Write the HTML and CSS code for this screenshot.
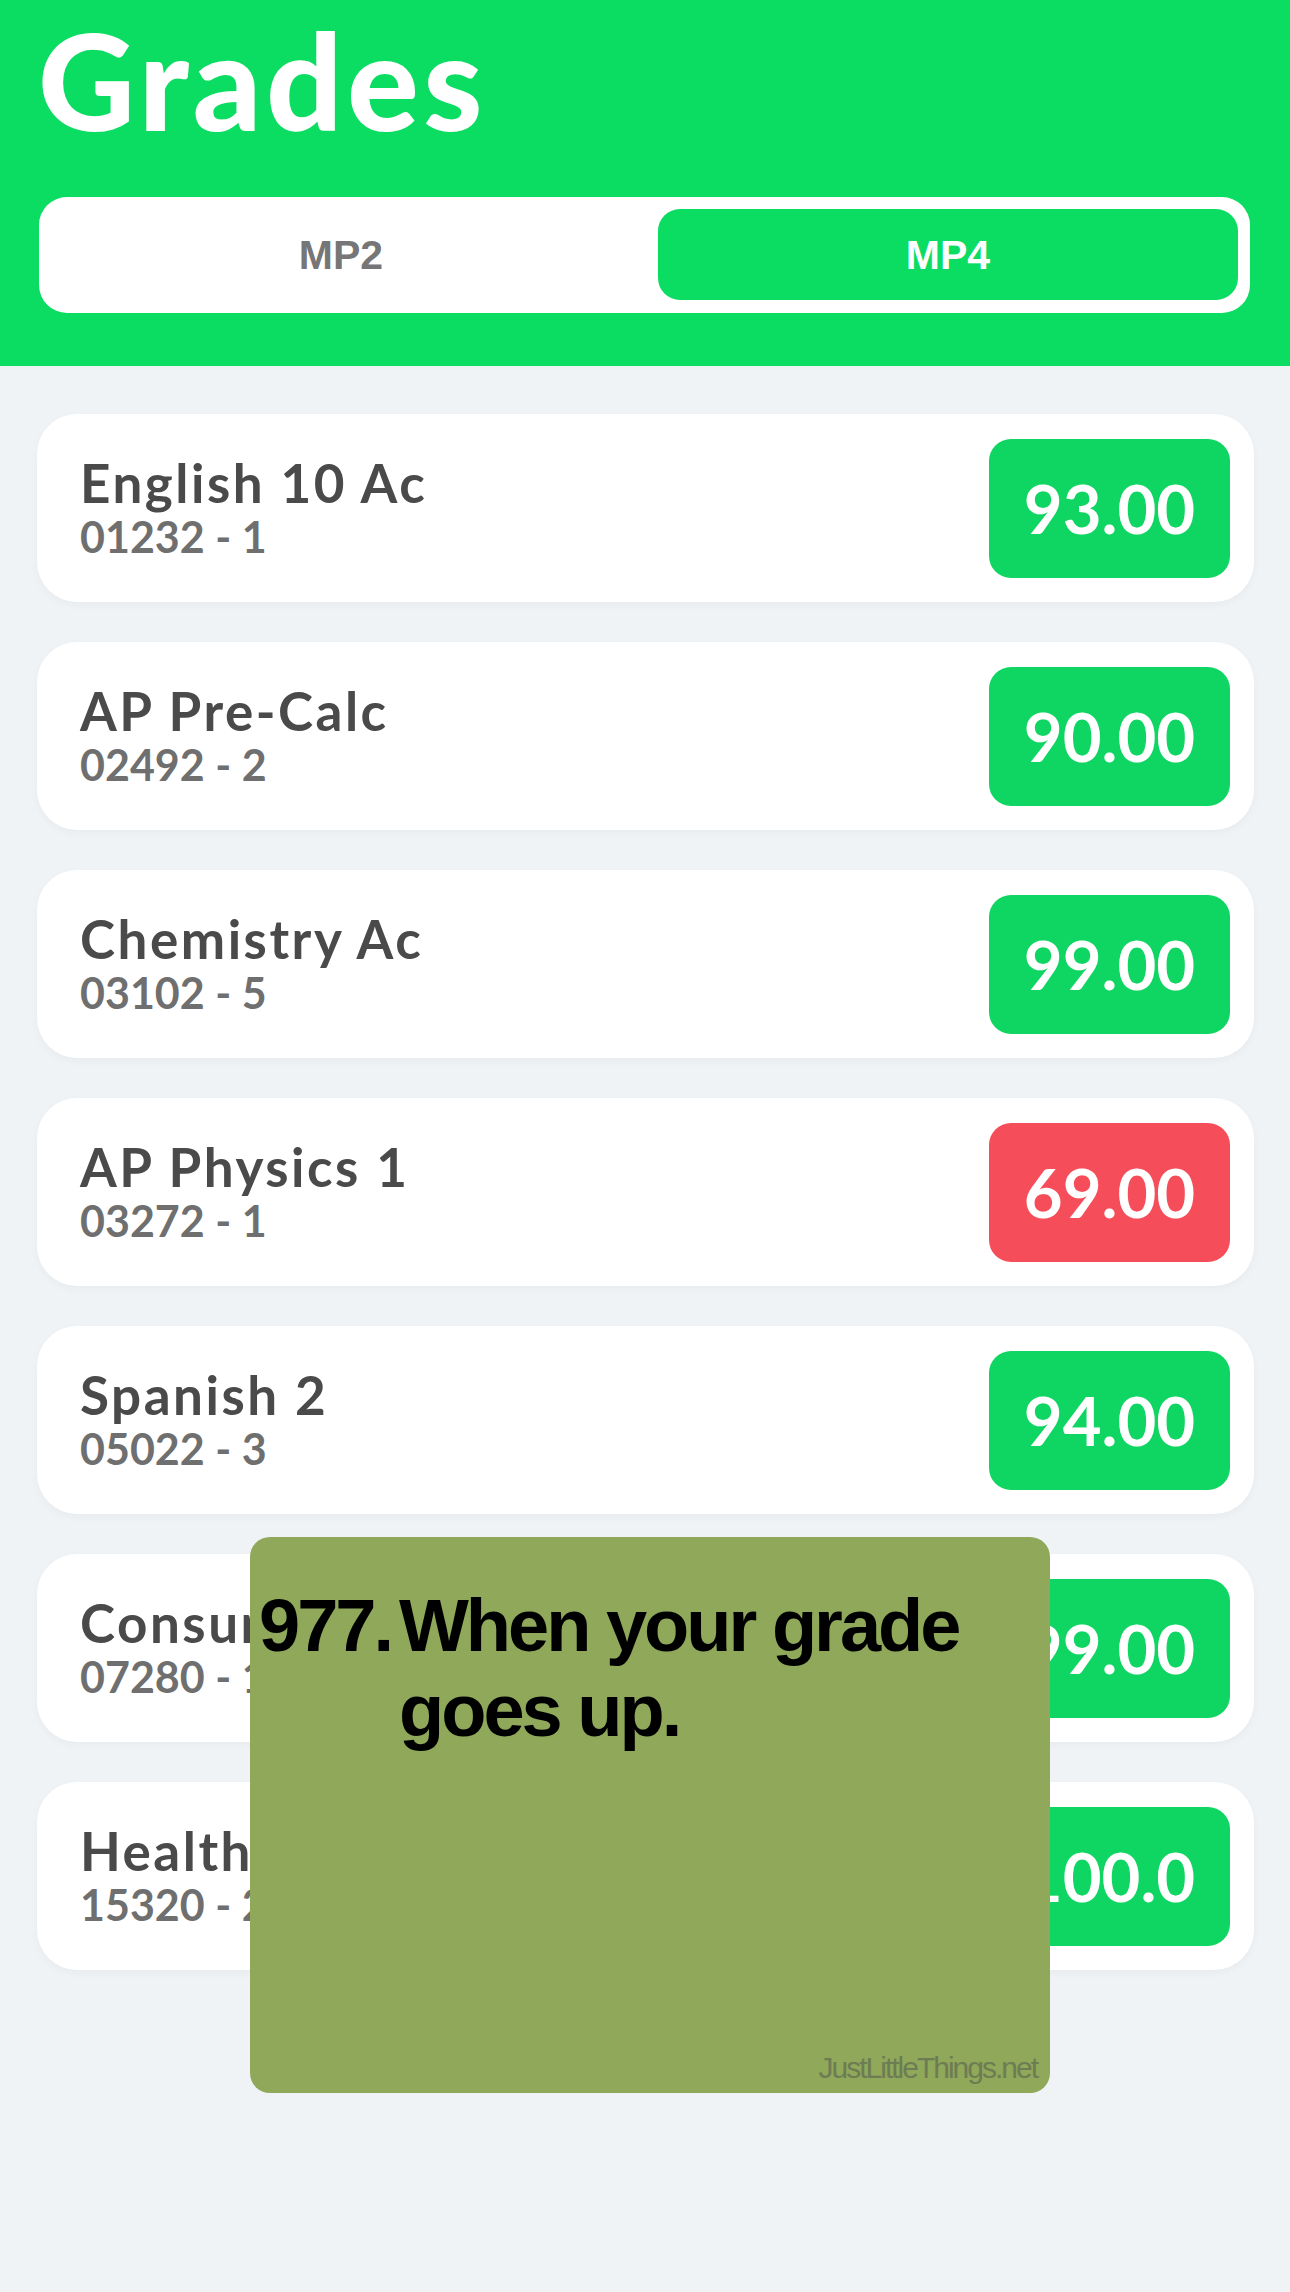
FILE: index.html
```html
<!DOCTYPE html>
<html lang="en">
<head>
<meta charset="utf-8">
<title>Grades</title>
<link rel="stylesheet" href="styles.css">
</head>
<body>
<header class="header">
  <h1 class="title">Grades</h1>
  <div class="segmented">
    <div class="segment">MP2</div>
    <div class="segment segment-active">MP4</div>
  </div>
</header>

<main class="list">
  <div class="card">
    <div class="course"><div class="name">English 10 Ac</div><div class="code">01232 - 1</div></div>
    <div class="grade">93.00</div>
  </div>
  <div class="card">
    <div class="course"><div class="name">AP Pre-Calc</div><div class="code">02492 - 2</div></div>
    <div class="grade">90.00</div>
  </div>
  <div class="card">
    <div class="course"><div class="name">Chemistry Ac</div><div class="code">03102 - 5</div></div>
    <div class="grade">99.00</div>
  </div>
  <div class="card">
    <div class="course"><div class="name">AP Physics 1</div><div class="code">03272 - 1</div></div>
    <div class="grade grade-low">69.00</div>
  </div>
  <div class="card">
    <div class="course"><div class="name">Spanish 2</div><div class="code">05022 - 3</div></div>
    <div class="grade">94.00</div>
  </div>
  <div class="card">
    <div class="course"><div class="name">Consumer</div><div class="code">07280 - 1</div></div>
    <div class="grade">99.00</div>
  </div>
  <div class="card">
    <div class="course"><div class="name">Health</div><div class="code">15320 - 2</div></div>
    <div class="grade">100.0</div>
  </div>
</main>

<div class="meme">
  <div class="meme-text">
    <span class="meme-num">977.</span>
    <span class="meme-line">When your grade goes up.</span>
  </div>
  <div class="watermark">JustLittleThings.net</div>
</div>
</body>
</html>
```
FILE: styles.css
```css
html, body {
  margin: 0;
  padding: 0;
}
body {
  background: #f0f3f5;
  font-family: "Lato", "Open Sans", sans-serif;
  width: 1290px;
  min-height: 2292px;
  position: relative;
}

.header {
  background: #0bdc62;
  height: 366px;
  box-sizing: border-box;
  padding: 12px 40px 0 39px;
}
.title {
  margin: 0 0 49px -1px;
  font-family: "Lato", sans-serif;
  font-weight: 900;
  font-size: 134px;
  line-height: 136px;
  color: #ffffff;
  letter-spacing: 4.5px;
}
.segmented {
  background: #ffffff;
  border-radius: 28px;
  height: 116px;
  box-sizing: border-box;
  padding: 12px 12px 13px 12px;
  display: grid;
  grid-template-columns: 1fr 1fr;
  column-gap: 27px;
}
.segment {
  display: flex;
  align-items: center;
  justify-content: center;
  border-radius: 22px;
  font-family: "Liberation Sans", Arial, sans-serif;
  font-weight: 700;
  font-size: 41px;
  color: #767676;
  padding-top: 2px;
}
.segment-active {
  background: #0bdc62;
  color: #ffffff;
}

.list {
  padding: 48px 36px 0 37px;
  display: flex;
  flex-direction: column;
  gap: 40px;
}
.card {
  background: #ffffff;
  border-radius: 40px;
  height: 188px;
  box-sizing: border-box;
  padding: 0 24px 0 43px;
  display: flex;
  align-items: center;
  justify-content: space-between;
  box-shadow: 0 3px 8px rgba(0, 0, 0, 0.035);
}
.course {
  display: flex;
  flex-direction: column;
  min-width: 0;
}
.name {
  font-weight: 700;
  font-size: 53px;
  line-height: 56px;
  letter-spacing: 2.5px;
  color: #4a4a4a;
  white-space: nowrap;
}
.code {
  font-weight: 700;
  font-size: 43px;
  line-height: 51px;
  color: #6f6f6f;
}
.grade {
  width: 241px;
  height: 139px;
  border-radius: 22px;
  background: #0fd562;
  color: #ffffff;
  display: flex;
  align-items: center;
  justify-content: center;
  font-weight: 700;
  font-size: 67px;
}
.grade-low {
  background: #f54e5a;
}

.meme {
  position: absolute;
  left: 250px;
  top: 1537px;
  width: 800px;
  height: 556px;
  box-sizing: border-box;
  background: #8fa85a;
  border-radius: 20px;
  padding: 46px 13px 8px 9px;
  display: flex;
  flex-direction: column;
}
.meme-text {
  display: flex;
  font-family: "Liberation Sans", Arial, sans-serif;
  font-weight: 700;
  font-size: 74px;
  line-height: 85px;
  letter-spacing: -3px;
  color: #000000;
}
.meme-num {
  flex: 0 0 140px;
}
.meme-line {
  width: 610px;
}
.watermark {
  margin-top: auto;
  align-self: flex-end;
  font-family: "Liberation Sans", Arial, sans-serif;
  font-size: 30px;
  line-height: 34px;
  letter-spacing: -2px;
  color: #6d7c52;
}
```
